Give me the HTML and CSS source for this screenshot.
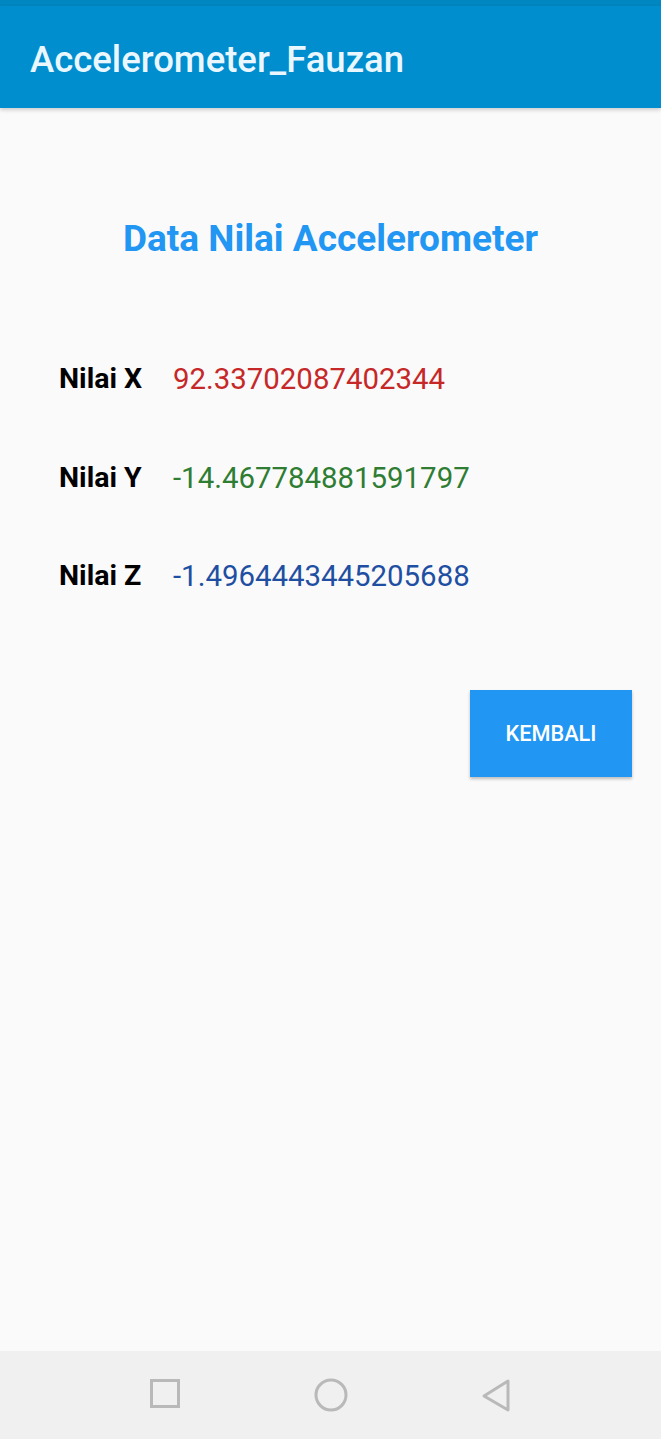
FILE: index.html
```html
<!DOCTYPE html>
<html>
<head>
<meta charset="utf-8">
<link rel="stylesheet" href="styles.css">
</head>
<body>
<div class="screen">
  <div class="status-bar"></div>
  <header class="app-bar">
    <h1 class="app-title">Accelerometer_Fauzan</h1>
  </header>
  <main class="content">
    <h2 class="heading">Data Nilai Accelerometer</h2>
    <div class="rows">
      <div class="row">
        <span class="label">Nilai X</span>
        <span class="value value-x">92.33702087402344</span>
      </div>
      <div class="row">
        <span class="label">Nilai Y</span>
        <span class="value value-y">-14.467784881591797</span>
      </div>
      <div class="row">
        <span class="label">Nilai Z</span>
        <span class="value value-z">-1.4964443445205688</span>
      </div>
    </div>
    <div class="actions">
      <button class="btn">KEMBALI</button>
    </div>
  </main>
  <nav class="nav-bar">
    <span class="nav-icon">
      <svg width="40" height="40" viewBox="0 0 40 40"><rect x="5.5" y="5.5" width="27" height="26" fill="none" stroke="#b9b9b9" stroke-width="3"/></svg>
    </span>
    <span class="nav-icon">
      <svg width="40" height="40" viewBox="0 0 40 40"><circle cx="20" cy="20" r="15" fill="none" stroke="#b9b9b9" stroke-width="3"/></svg>
    </span>
    <span class="nav-icon">
      <svg width="40" height="40" viewBox="0 0 40 40"><path d="M32 6 L8 21 L32 35 Z" fill="none" stroke="#b9b9b9" stroke-width="3" stroke-linejoin="round"/></svg>
    </span>
  </nav>
</div>
</body>
</html>
```
FILE: styles.css
```css
html, body {
  margin: 0;
  padding: 0;
  background: #fafafa;
}
.screen {
  width: 661px;
  height: 1439px;
  display: flex;
  flex-direction: column;
  font-family: Roboto, "Liberation Sans", sans-serif;
  overflow: hidden;
}
.status-bar {
  height: 6px;
  background: #0086c1;
}
.app-bar {
  height: 102px;
  box-sizing: border-box;
  background: #008ecf;
  padding: 32px 0 0 30px;
  box-shadow: 0 2px 4px rgba(0,0,0,0.18);
  position: relative;
  z-index: 1;
}
.app-title {
  margin: 0;
  font-size: 36.5px;
  line-height: 44px;
  font-weight: 500;
  color: #eaf7ff;
  letter-spacing: 0;
}
.content {
  flex: 1;
  display: flex;
  flex-direction: column;
  background: #fafafa;
}
.heading {
  margin: 109px 0 0 0;
  text-align: center;
  font-size: 37px;
  line-height: 44px;
  font-weight: 700;
  color: #2196f3;
}
.rows {
  margin-top: 101px;
  display: flex;
  flex-direction: column;
  gap: 64.5px;
  padding-left: 59px;
}
.row {
  display: flex;
  font-size: 29.4px;
  line-height: 34px;
}
.label {
  width: 114px;
  font-weight: 700;
  color: #000;
  font-size: 28.5px;
}
.value {
  font-weight: 400;
}
.value-x { color: #c62828; }
.value-y { color: #2e7d32; }
.value-z { color: #1e4fa2; }
.actions {
  display: flex;
  justify-content: flex-end;
  margin-top: 97px;
  padding-right: 29px;
}
.btn {
  width: 162px;
  height: 87px;
  border: none;
  border-radius: 0;
  background: #2196f3;
  color: #fff;
  font-family: Roboto, "Liberation Sans", sans-serif;
  font-size: 21.7px;
  font-weight: 500;
  padding: 0;
  box-shadow: 0 2px 3px rgba(0,0,0,0.25);
}
.nav-bar {
  height: 88px;
  background: #f0f0f0;
  display: flex;
  justify-content: center;
  align-items: center;
  gap: 125px;
}
.nav-icon {
  width: 40px;
  height: 40px;
  display: block;
}
.nav-icon svg {
  display: block;
}
```
